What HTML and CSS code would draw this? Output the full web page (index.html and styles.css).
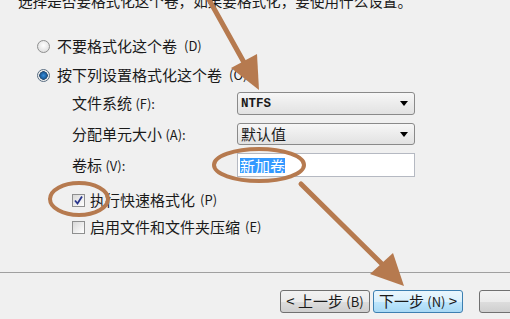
FILE: index.html
```html
<!DOCTYPE html>
<html lang="zh-CN">
<head>
    <meta charset="UTF-8">
    <meta name="viewport" content="width=device-width, initial-scale=1.0">
    <title>格式化分区</title>
    <link rel="stylesheet" href="styles.css">
</head>
<body>
    <div class="dialog">
        <p class="intro">选择是否要格式化这个卷，如果要格式化，要使用什么设置。</p>

        <div class="choices">
            <label class="radio-row"><span class="radio"></span>不要格式化这个卷 <span class="key">(D)</span></label>
            <label class="radio-row"><span class="radio checked"></span>按下列设置格式化这个卷 <span class="key">(O):</span></label>
        </div>

        <div class="fields">
            <span class="field-label">文件系统 <span class="key">(F):</span></span>
            <div class="select"><span class="mono">NTFS</span><span class="caret"></span></div>

            <span class="field-label">分配单元大小 <span class="key">(A):</span></span>
            <div class="select short"><span>默认值</span><span class="caret"></span></div>

            <span class="field-label">卷标 <span class="key">(V):</span></span>
            <div class="textbox"><span class="selected">新加卷</span></div>
        </div>

        <div class="checks">
            <label class="check-row"><span class="checkbox">
                <svg width="11" height="11" viewBox="0 0 11 11"><path d="M2 5.5 L4.5 8.5 L9 1.5" fill="none" stroke="#27348b" stroke-width="1.8"/></svg>
            </span>执行快速格式化 <span class="key">(P)</span></label>
            <label class="check-row"><span class="checkbox"></span>启用文件和文件夹压缩 <span class="key">(E)</span></label>
        </div>
    </div>

    <div class="footer">
        <button class="btn">&lt; 上一步 <span class="key">(B)</span></button>
        <button class="btn primary">下一步 <span class="key">(N)</span> &gt;</button>
        <button class="btn"></button>
    </div>

    <!-- 手描きの注釈（矢印と丸） -->
    <svg class="marks" width="510" height="319" viewBox="0 0 510 319">
        <g fill="none" stroke="#b67a4f" stroke-width="5" stroke-linecap="round">
            <line x1="207" y1="-4" x2="246" y2="66"/>
            <ellipse cx="259" cy="165" rx="45" ry="16" stroke-width="4"/>
            <ellipse cx="79" cy="199" rx="29" ry="16" stroke-width="4"/>
            <line x1="301" y1="184" x2="385" y2="267"/>
        </g>
        <g fill="#b67a4f">
            <polygon points="231,68 257,54 259,90"/>
            <polygon points="370,274 393,253 404,286"/>
        </g>
    </svg>
</body>
</html>
```

FILE: styles.css
```css
/* ダイアログ全体 */
body {
    margin: 0;
    width: 510px;
    height: 319px;
    overflow: hidden;
    position: relative;
    background-color: #f0f0f0;
    font-family: "Noto Sans CJK SC", sans-serif;
    font-size: 15px;
    color: #1a1a1a;
}
.intro {
    margin: -7px 0 0 18px;
    font-size: 14.6px;
    line-height: 16px;
    white-space: nowrap;
}
.key {
    font-size: 13px;
}
/* ラジオボタン */
.choices {
    margin: 27px 0 0 37px;
    display: flex;
    flex-direction: column;
    gap: 9px;
}
.radio-row, .check-row {
    display: flex;
    align-items: center;
    height: 20px;
    line-height: 20px;
    white-space: nowrap;
}
.radio-row {
    gap: 7px;
}
.radio {
    width: 13px;
    height: 13px;
    box-sizing: border-box;
    border-radius: 50%;
    border: 1px solid #8e8f8f;
    background: radial-gradient(circle at 50% 40%, #ffffff, #d6d6d6);
}
.radio.checked {
    border-color: #5a6e82;
    background: radial-gradient(circle, #3a8fdc 0, #1c5e9e 3px, #2b4e73 4px, #e9e9e9 4.5px, #f6f6f6 6px);
}
/* 入力欄 */
.fields {
    display: grid;
    grid-template-columns: 165px 178px;
    grid-template-rows: 23px 22px 24px;
    row-gap: 8px;
    margin: 7px 0 0 72px;
    align-items: center;
}
.field-label {
    white-space: nowrap;
    line-height: 20px;
}
.select {
    height: 23px;
    box-sizing: border-box;
    border: 1px solid #8a8a8a;
    border-radius: 3px;
    background: linear-gradient(#f7f7f7, #ececec 50%, #e2e2e2);
    display: flex;
    align-items: center;
    justify-content: space-between;
    padding: 0 6px 0 3px;
    line-height: 18px;
}
.select.short {
    height: 22px;
}
.mono {
    font-family: "Liberation Mono", monospace;
    font-weight: bold;
    font-size: 12.5px;
}
.caret {
    width: 0;
    height: 0;
    border-left: 4px solid transparent;
    border-right: 4px solid transparent;
    border-top: 5px solid #000;
}
.textbox {
    height: 24px;
    box-sizing: border-box;
    border: 1px solid #b5b9c2;
    background-color: #ffffff;
    display: flex;
    align-items: center;
    padding-left: 2px;
}
.selected {
    background-color: #3399ff;
    color: #ffffff;
    line-height: 15px;
}
/* チェックボックス */
.checks {
    margin: 13px 0 0 72px;
    display: flex;
    flex-direction: column;
    gap: 7px;
}
.check-row {
    gap: 5px;
}
.checkbox {
    width: 13px;
    height: 13px;
    box-sizing: border-box;
    border: 1px solid #8e8f8f;
    background: linear-gradient(135deg, #d8d8d8, #ffffff);
    display: flex;
    align-items: center;
    justify-content: center;
}
/* 下部ボタン */
.footer {
    margin-top: 35px;
    border-top: 1px solid #a0a0a0;
    padding: 17px 0 0 280px;
    display: flex;
}
.btn {
    flex-shrink: 0;
    width: 90px;
    height: 23px;
    padding: 0;
    border: 1px solid #707070;
    border-radius: 3px;
    background: linear-gradient(#f2f2f2, #ebebeb 50%, #dddddd 51%, #cfcfcf);
    font-family: "Noto Sans CJK SC", sans-serif;
    font-size: 15px;
    line-height: 20px;
    color: #1a1a1a;
    white-space: nowrap;
}
.btn.primary {
    margin-left: 3px;
    border-color: #3c7fb1;
    background: linear-gradient(#eaf6fd, #d9f0fc 50%, #bee6fd 51%, #a7d9f5);
}
.btn.primary + .btn {
    margin-left: 16px;
}
/* 注釈レイヤー */
.marks {
    position: absolute;
    left: 0;
    top: 0;
    pointer-events: none;
}
```
